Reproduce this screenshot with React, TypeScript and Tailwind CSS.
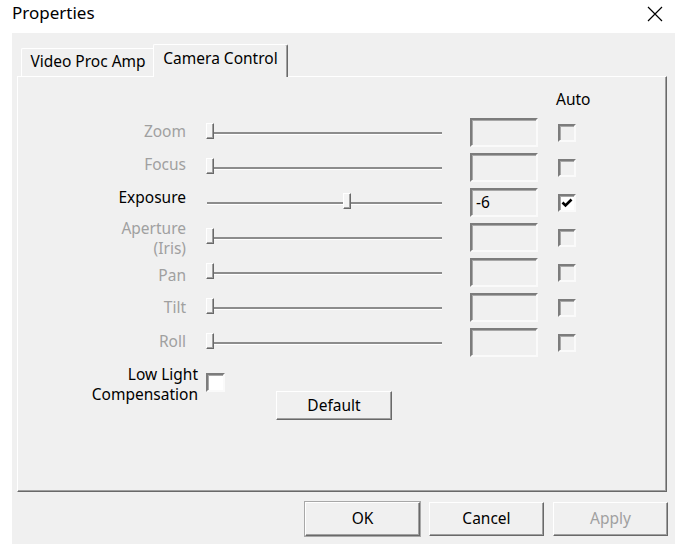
const rows = [
  { label: ['Zoom'], enabled: false, pos: 0, value: '', auto: false, shift: 'mb-[3px]' },
  { label: ['Focus'], enabled: false, pos: 0, value: '', auto: false, shift: 'mb-[8px]' },
  { label: ['Exposure'], enabled: true, pos: 0.6, value: '-6', auto: true, shift: 'mb-[12px]' },
  { label: ['Aperture', '(Iris)'], enabled: false, pos: 0, value: '', auto: false, shift: 'mb-[0px]' },
  { label: ['Pan'], enabled: false, pos: 0, value: '', auto: false, shift: 'mt-[4px]' },
  { label: ['Tilt'], enabled: false, pos: 0, value: '', auto: false, shift: 'mb-[1px]' },
  { label: ['Roll'], enabled: false, pos: 0, value: '', auto: false, shift: 'mb-[4px]' },
];

const sunken =
  'border-2 border-t-[#7c7c7c] border-l-[#7c7c7c] border-r-[#fafafa] border-b-[#fafafa] shadow-[inset_1px_1px_0_#a8a8a8]';

const raised =
  'border border-t-white border-l-white border-r-[#696969] border-b-[#696969] shadow-[inset_-1px_-1px_0_#a0a0a0] bg-[#f0f0f0]';

function Slider({ pos }: { pos: number }) {
  return (
    <div className="relative h-[16px] w-[237px] pt-[9px]">
      <div className="ml-[2px] h-[3px] border-t-2 border-b border-t-[#8c8c8c] border-b-white" />
      <div
        className="absolute top-0 h-[16px] w-[8px] border border-t-white border-l-white border-r-[#696969] border-b-[#696969] bg-[#f4f4f4] shadow-[inset_-1px_-1px_0_#a0a0a0]"
        style={{ left: 1 + pos * 228 }}
      />
    </div>
  );
}

function Check({ checked, white }: { checked: boolean; white: boolean }) {
  return (
    <div
      className={`flex h-[18px] w-[18px] items-center justify-center ${sunken} ${
        white ? 'bg-white' : 'bg-[#f0f0f0]'
      }`}
    >
      {checked && (
        <svg width="12" height="12" viewBox="0 0 12 12">
          <path d="M1.5 5.5 L4.5 8.5 L10.5 2.5" fill="none" stroke="#000" strokeWidth="2.6" />
        </svg>
      )}
    </div>
  );
}

export default function App() {
  return (
    <div className="flex h-[544px] w-[682px] flex-col bg-white font-['Noto_Sans','Open_Sans',sans-serif] text-[15.5px] text-black">
      <div className="flex h-[33px] items-start justify-between pl-[12px] pr-[19px]">
        <span className="pt-[1px] text-[17px] leading-[24px]">Properties</span>
        <svg className="mt-[6px]" width="16" height="16" viewBox="0 0 16 16">
          <path d="M1 1 L15 15 M15 1 L1 15" stroke="#000" strokeWidth="1.2" />
        </svg>
      </div>

      <div className="ml-[12px] mr-[7px] flex flex-1 flex-col bg-[#f0f0f0] pl-[5px] pt-[11px]">
        <div className="flex h-[32px] items-end pl-[4px]">
          <div className="flex h-[28px] w-[133px] items-center justify-center rounded-tl-[2px] border-t border-l border-white pb-[1px]">
            Video Proc Amp
          </div>
          <div className="relative z-10 -mb-[1px] -ml-[1px] flex h-[33px] w-[135px] items-start justify-center rounded-t-[2px] border-t border-l border-r border-t-white border-l-white border-r-[#696969] bg-[#f0f0f0] pt-[2px] shadow-[inset_-1px_0_0_#a0a0a0]">
            Camera Control
          </div>
        </div>

        <div className="h-[416px] w-[650px] border border-t-white border-l-white border-r-[#696969] border-b-[#696969] pt-[12px] shadow-[inset_-1px_-1px_0_#a0a0a0]">
          <div className="h-[20px] pl-[538px] leading-[20px]">Auto</div>

          <div className="mt-[6px] flex flex-col">
            {rows.map((row) => (
              <div key={row.label[0]} className="flex h-[35px] items-center">
                <div
                  className={`w-[168px] text-right leading-[20px] ${row.shift} ${
                    row.enabled ? 'text-black' : 'text-[#a0a0a0]'
                  }`}
                >
                  {row.label.map((l) => (
                    <div key={l}>{l}</div>
                  ))}
                </div>
                <div className="mb-[3px] ml-[19px]">
                  <Slider pos={row.pos} />
                </div>
                <div className={`ml-[28px] flex h-[29px] w-[68px] items-center bg-[#f0f0f0] pl-[4px] ${sunken}`}>
                  {row.value}
                </div>
                <div className="ml-[20px]">
                  <Check checked={row.auto} white={row.enabled} />
                </div>
              </div>
            ))}
          </div>

          <div className="mt-[4px] flex items-start">
            <div className="w-[180px] text-right leading-[20px]">
              <div>Low Light</div>
              <div>Compensation</div>
            </div>
            <div className={`ml-[8px] mt-[9px] h-[19px] w-[19px] bg-white ${sunken}`} />
            <button type="button" className={`ml-[51px] mt-[27px] flex h-[29px] w-[116px] items-center justify-center ${raised}`}>
              Default
            </button>
          </div>
        </div>

        <div className="mt-[10px] flex justify-end gap-[9px] pr-[7px]">
          <button type="button" className={`flex h-[34px] w-[115px] items-center justify-center ${raised} outline outline-1 outline-[#a8a8a8]`}>
            OK
          </button>
          <button type="button" className={`flex h-[34px] w-[115px] items-center justify-center ${raised}`}>
            Cancel
          </button>
          <button type="button" className={`flex h-[34px] w-[115px] items-center justify-center text-[#a0a0a0] ${raised}`}>
            Apply
          </button>
        </div>
      </div>
    </div>
  );
}
